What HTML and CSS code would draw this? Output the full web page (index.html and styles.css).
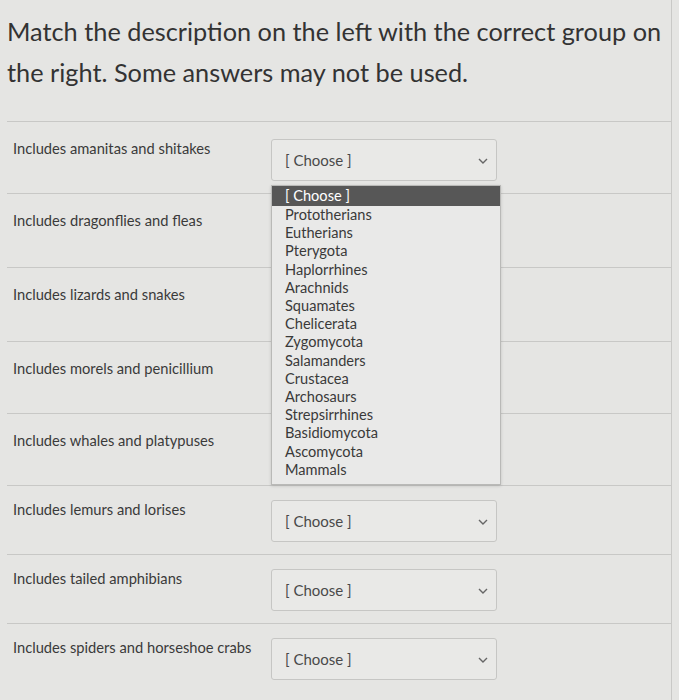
FILE: index.html
```html
<!DOCTYPE html>
<html lang="en">
<head>
  <meta charset="UTF-8">
  <meta name="viewport" content="width=device-width, initial-scale=1.0">
  <title>Matching Question</title>
  <link rel="stylesheet" href="styles.css">
</head>
<body>
  <div class="quiz">
    <p class="question">Match the description on the left with the correct group on the right. Some answers may not be used.</p>

    <div class="answers">
      <div class="match-row">
        <div class="prompt">Includes amanitas and shitakes</div>
        <div class="select-wrap">
          <div class="select">
            <span>[ Choose ]</span>
            <svg class="chevron" width="10" height="6" viewBox="0 0 10 6"><path d="M1 1l4 4 4-4" fill="none" stroke="#666" stroke-width="1.4"/></svg>
          </div>
          <ul class="options">
            <li class="selected">[ Choose ]</li>
            <li>Prototherians</li>
            <li>Eutherians</li>
            <li>Pterygota</li>
            <li>Haplorrhines</li>
            <li>Arachnids</li>
            <li>Squamates</li>
            <li>Chelicerata</li>
            <li>Zygomycota</li>
            <li>Salamanders</li>
            <li>Crustacea</li>
            <li>Archosaurs</li>
            <li>Strepsirrhines</li>
            <li>Basidiomycota</li>
            <li>Ascomycota</li>
            <li>Mammals</li>
          </ul>
        </div>
      </div>

      <div class="match-row tall">
        <div class="prompt">Includes dragonflies and fleas</div>
      </div>

      <div class="match-row tall">
        <div class="prompt">Includes lizards and snakes</div>
      </div>

      <div class="match-row">
        <div class="prompt">Includes morels and penicillium</div>
      </div>

      <div class="match-row">
        <div class="prompt">Includes whales and platypuses</div>
      </div>

      <div class="match-row short">
        <div class="prompt">Includes lemurs and lorises</div>
        <div class="select-wrap">
          <div class="select">
            <span>[ Choose ]</span>
            <svg class="chevron" width="10" height="6" viewBox="0 0 10 6"><path d="M1 1l4 4 4-4" fill="none" stroke="#666" stroke-width="1.4"/></svg>
          </div>
        </div>
      </div>

      <div class="match-row short">
        <div class="prompt">Includes tailed amphibians</div>
        <div class="select-wrap">
          <div class="select">
            <span>[ Choose ]</span>
            <svg class="chevron" width="10" height="6" viewBox="0 0 10 6"><path d="M1 1l4 4 4-4" fill="none" stroke="#666" stroke-width="1.4"/></svg>
          </div>
        </div>
      </div>

      <div class="match-row short">
        <div class="prompt">Includes spiders and horseshoe crabs</div>
        <div class="select-wrap">
          <div class="select">
            <span>[ Choose ]</span>
            <svg class="chevron" width="10" height="6" viewBox="0 0 10 6"><path d="M1 1l4 4 4-4" fill="none" stroke="#666" stroke-width="1.4"/></svg>
          </div>
        </div>
      </div>
    </div>
  </div>
</body>
</html>
```

FILE: styles.css
```css
/* General Styles */
body {
  font-family: Lato, "Open Sans", sans-serif;
  background-color: #e5e5e3;
  margin: 0;
  padding: 0;
  color: #333;
}

.quiz {
  width: 664px;
  min-height: 700px;
  padding-left: 7px;
  border-right: 1px solid #c9c9c7;
}

.question {
  margin: 0;
  padding: 11px 0 0;
  font-size: 25.3px;
  line-height: 41px;
  color: #333;
  height: 110px;
}

.answers {
  border-top: 1px solid #c8c8c6;
}

.match-row {
  display: flex;
  align-items: flex-start;
  height: 72px;
  border-bottom: 1px solid #c8c8c6;
  box-sizing: border-box;
}

.match-row.tall {
  height: 74px;
}

.match-row.short {
  height: 69px;
}

.match-row:last-child {
  border-bottom: none;
}

.prompt {
  width: 264px;
  padding: 17px 0 0 6px;
  box-sizing: border-box;
  font-size: 14.7px;
  line-height: 18px;
  color: #3a3a3a;
}

.select-wrap {
  position: relative;
  margin-top: 17px;
}

.short .prompt {
  padding-top: 14px;
}

.short .select-wrap {
  margin-top: 14px;
}

.select {
  display: flex;
  align-items: center;
  justify-content: space-between;
  width: 226px;
  height: 42px;
  padding: 0 8px 0 13px;
  box-sizing: border-box;
  border: 1px solid #c6c6c4;
  border-radius: 3px;
  background: #e9e9e7;
  font-size: 15px;
  color: #4a4a4a;
}

.chevron {
  margin-top: 2px;
}

.options {
  position: absolute;
  top: 46px;
  left: 0;
  width: 230px;
  margin: 0;
  padding: 0 0 5px;
  list-style: none;
  background: #e9e9e8;
  border: 1px solid #b9b9b7;
  box-shadow: 0 1px 3px rgba(0, 0, 0, 0.15);
  box-sizing: border-box;
  z-index: 2;
}

.options li {
  padding: 0 13px;
  font-size: 14.6px;
  line-height: 18.2px;
  color: #3a3a3a;
}

.options li.selected {
  line-height: 20px;
  background: #575757;
  color: #fff;
}
```
